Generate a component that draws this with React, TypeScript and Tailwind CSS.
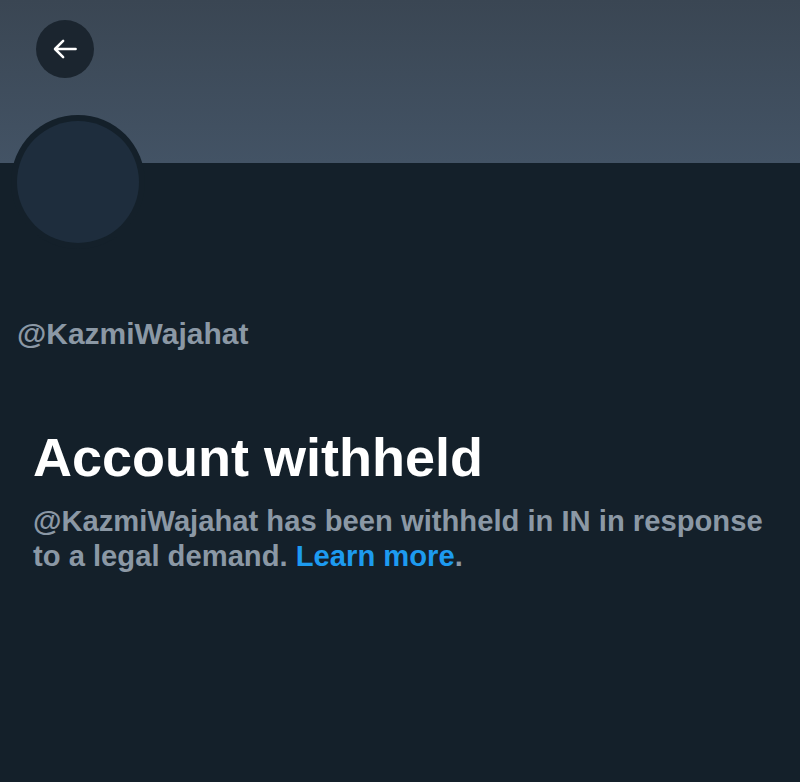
import React from "react";

export default function App() {
  return (
    <div
      className="w-[800px] h-[782px] bg-[#14202a] overflow-hidden"
      style={{ fontFamily: '"Liberation Sans", Arial, sans-serif' }}
    >
      <div className="h-[163px] bg-gradient-to-b from-[#3a4653] to-[#435365] pt-[20px] pl-[36px]">
        <button className="w-[58px] h-[58px] rounded-full bg-[#1b252f] flex items-center justify-center">
          <svg width="30" height="30" viewBox="0 0 24 24" fill="none">
            <path
              d="M20.5 12H4.5M10.5 5.5L4 12L10.5 18.5"
              stroke="white"
              strokeWidth="2"
              strokeLinecap="round"
              strokeLinejoin="round"
            />
          </svg>
        </button>
      </div>
      <div className="-mt-[48px] ml-[11px] w-[134px] h-[134px] rounded-full bg-[#14202a] p-[6px]">
        <div className="w-full h-full rounded-full bg-[#1e2d3d]" />
      </div>
      <div className="mt-[67px] pl-[17px] text-[30px] leading-[35px] font-bold text-[#8b98a5]">
        @KazmiWajahat
      </div>
      <div className="px-[33px]">
        <h1 className="mt-[76px] text-[54px] leading-[60px] font-bold text-white">
          Account withheld
        </h1>
        <p className="mt-[17px] text-[29.2px] leading-[35px] font-bold text-[#8b98a5]">
          @KazmiWajahat has been withheld in IN in response to a legal demand.{" "}
          <span className="text-[#1d9bf0]">Learn more</span>.
        </p>
      </div>
    </div>
  );
}
